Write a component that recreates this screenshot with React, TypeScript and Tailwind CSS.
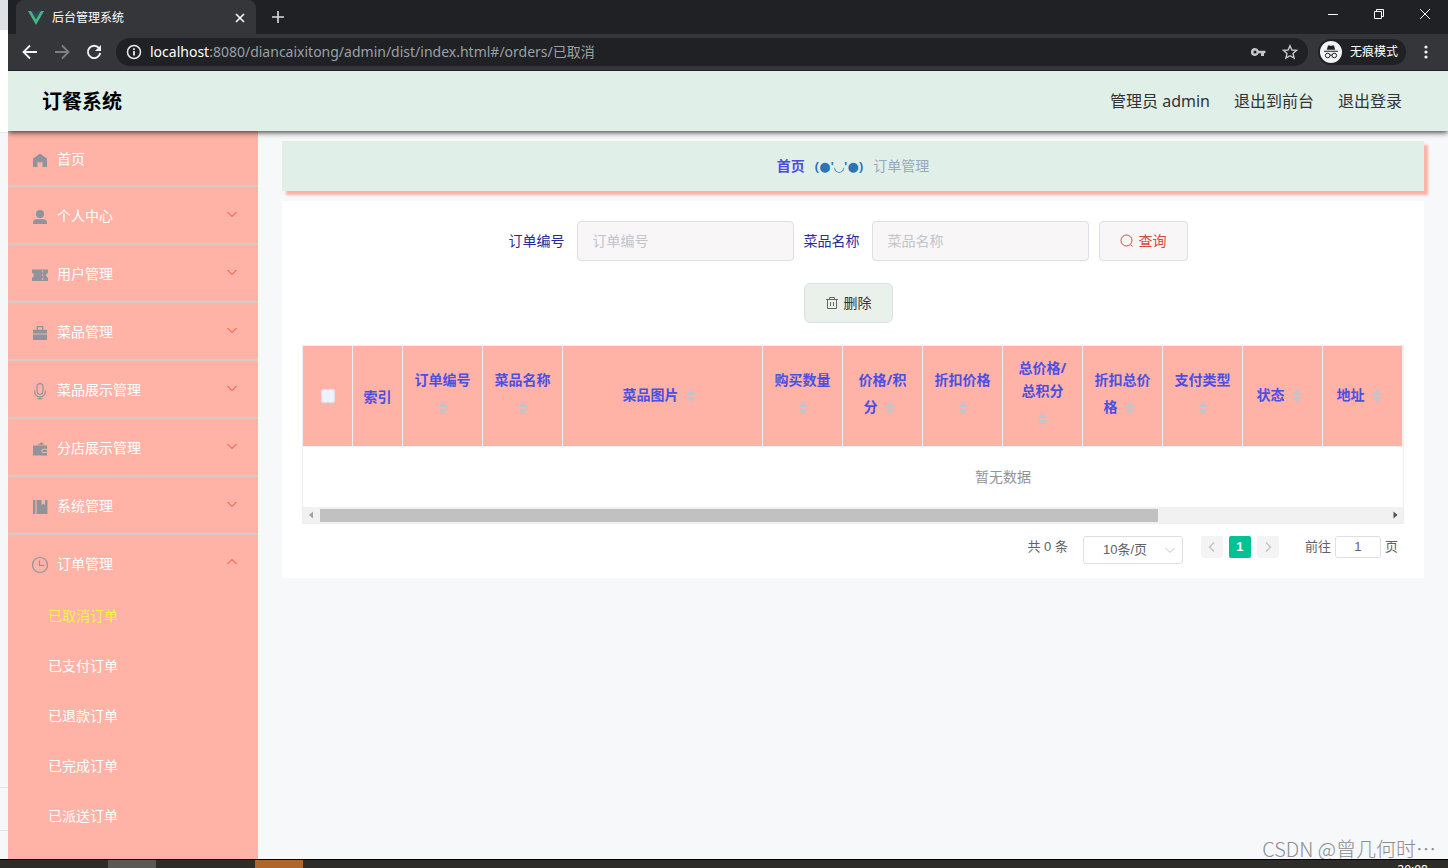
/**
 * @fileoverview Order management page of the canteen admin, shown in its browser window
 * @description Browser chrome, page header, side menu and the cancelled-orders table.
 *
 * @module App
 */

import type { ReactNode } from 'react';

interface MenuEntry {
  label: string;
  icon: ReactNode;
}

interface Column {
  label: string;
  /** Tailwind width class of the column */
  width: string;
  sortable?: boolean;
}

const MENU: MenuEntry[] = [
  {
    label: '个人中心',
    icon: (
      <>
        <circle cx="9" cy="6" r="4" />
        <path d="M2 16v-1.2A3.6 3.6 0 0 1 5.6 11.2h6.8A3.6 3.6 0 0 1 16 14.8V16z" />
      </>
    ),
  },
  {
    label: '用户管理',
    icon: (
      <path
        fillRule="evenodd"
        d="M1 3.5h16v3.2a2.6 2.6 0 0 0 0 5v3.3H1v-3.3a2.6 2.6 0 0 0 0-5zM11.2 4.5v2h1v-2zm0 3.8v2h1v-2zm0 3.8v2h1v-2z"
      />
    ),
  },
  {
    label: '菜品管理',
    icon: (
      <path
        fillRule="evenodd"
        d="M5.6 2h6.8v3.8H16v3.6H2V5.8h3.6zM7 3.3v2.5h4V3.3zM2 10.4h14V16H2z"
      />
    ),
  },
  {
    label: '菜品展示管理',
    icon: (
      <g fill="none" stroke="currentColor" strokeWidth="1.1">
        <rect x="6" y="1.6" width="6" height="10.6" rx="3" />
        <path d="M3.6 8.5v1a5.4 5.4 0 0 0 10.8 0v-1M9 14.8v2M6.5 16.8h5" />
      </g>
    ),
  },
  {
    label: '分店展示管理',
    icon: (
      <path
        fillRule="evenodd"
        d="M6.5 4.8 11 2l2 2.8zM2 5.6h14v3.2h-3.6a2.1 2.1 0 0 0 0 4.2H16v2.6H2zM12.4 9.8H16V12h-3.6a1.1 1.1 0 0 1 0-2.2z"
      />
    ),
  },
  {
    label: '系统管理',
    icon: <path d="M2 2h2.4v14H2zM5.6 2h5v5l1.7-1.2L14 7V2h2.4v14H5.6z" />,
  },
];

const ORDER_LINKS = ['已取消订单', '已支付订单', '已退款订单', '已完成订单', '已派送订单'];

const COLUMNS: Column[] = [
  { label: '索引', width: 'w-[50px]' },
  { label: '订单编号', width: 'w-[80px]', sortable: true },
  { label: '菜品名称', width: 'w-[80px]', sortable: true },
  { label: '菜品图片', width: 'w-[200px]', sortable: true },
  { label: '购买数量', width: 'w-[80px]', sortable: true },
  { label: '价格/积分', width: 'w-[80px]', sortable: true },
  { label: '折扣价格', width: 'w-[80px]', sortable: true },
  { label: '总价格/总积分', width: 'w-[80px]', sortable: true },
  { label: '折扣总价格', width: 'w-[80px]', sortable: true },
  { label: '支付类型', width: 'w-[80px]', sortable: true },
  { label: '状态', width: 'w-[80px]', sortable: true },
  { label: '地址', width: 'w-[80px]', sortable: true },
];

function Chevron({ className, up = false }: { className: string; up?: boolean }) {
  return (
    <svg viewBox="0 0 12 12" className={className} fill="none" stroke="currentColor">
      <path d={up ? 'M1.5 8 6 3.5 10.5 8' : 'M1.5 4 6 8.5 10.5 4'} />
    </svg>
  );
}

function SortCaret() {
  return (
    <span className="inline-flex h-[34px] w-6 items-center justify-center align-middle">
      <svg viewBox="0 0 10 12" className="h-3 w-2.5" fill="#c0c4cc">
        <path d="M0 5 5 0l5 5zM0 7h10l-5 5z" />
      </svg>
    </span>
  );
}

function TabStrip() {
  return (
    <div className="flex h-[34px] bg-[#202124] text-white">
      <div className="ml-2 flex w-60 items-center rounded-t-lg bg-[#35363a] pl-3 pr-[11px] pt-0.5">
        <svg viewBox="0 0 16 14" className="h-[14px] w-4">
          <path d="M0 0h3.2L8 8.3 12.8 0H16L8 13.9z" fill="#41b883" />
          <path d="M3.2 0H6.1L8 3.3 9.9 0h2.9L8 8.3z" fill="#35495e" />
        </svg>
        <span className="ml-2 flex-1 text-xs">后台管理系统</span>
        <button aria-label="关闭标签页">
          <svg viewBox="0 0 10 10" className="h-2.5 w-2.5" stroke="#fff" strokeWidth="1.6">
            <path d="M1 1l8 8M9 1 1 9" />
          </svg>
        </button>
      </div>
      <button aria-label="新标签页" className="ml-4">
        <svg viewBox="0 0 12 12" className="h-3 w-3" stroke="#dadce0" strokeWidth="1.6">
          <path d="M6 0v12M0 6h12" />
        </svg>
      </button>
      <div className="mb-1.5 ml-auto flex items-center gap-9 pr-[18px]">
        <button aria-label="最小化">
          <svg viewBox="0 0 10 10" className="h-2.5 w-2.5" stroke="#fff">
            <path d="M0 5.5h10" />
          </svg>
        </button>
        <button aria-label="还原">
          <svg viewBox="0 0 10 10" className="h-2.5 w-2.5" stroke="#fff" fill="none">
            <path d="M.5 2.5h7v7h-7zM2.5 2.5v-2h7v7h-2" />
          </svg>
        </button>
        <button aria-label="关闭">
          <svg viewBox="0 0 10 10" className="h-2.5 w-2.5" stroke="#fff">
            <path d="M0 0l10 10M10 0 0 10" />
          </svg>
        </button>
      </div>
    </div>
  );
}

function AddressBar() {
  return (
    <div className="relative z-20 flex h-[37px] items-center border-b border-[#202124] bg-[#35363a] pl-3.5 pr-3.5 text-white">
      <div className="flex items-center gap-4">
        <button aria-label="后退">
          <svg viewBox="0 0 16 16" className="h-4 w-4" fill="none" stroke="#f1f3f4" strokeWidth="1.8">
            <path d="M15 8H2M8 1.5 1.5 8 8 14.5" />
          </svg>
        </button>
        <button aria-label="前进">
          <svg viewBox="0 0 16 16" className="h-4 w-4" fill="none" stroke="#7d7f83" strokeWidth="1.8">
            <path d="M1 8h13M8 1.5 14.5 8 8 14.5" />
          </svg>
        </button>
        <button aria-label="刷新">
          <svg viewBox="0 0 16 16" className="h-4 w-4" fill="none" stroke="#f1f3f4" strokeWidth="1.9">
            <path d="M13 4.1A6.2 6.2 0 1 0 14.2 9" />
            <path d="M15 1v6H9z" fill="#f1f3f4" stroke="none" />
          </svg>
        </button>
      </div>
      <div className="ml-3.5 flex h-7 flex-1 items-center rounded-full bg-[#202124] px-2.5">
        <svg viewBox="0 0 16 16" className="h-4 w-4" fill="none" stroke="#e8eaed" strokeWidth="1.5">
          <circle cx="8" cy="8" r="6.5" />
          <path d="M8 7v4.5M8 4.3v1.6" strokeWidth="1.8" />
        </svg>
        <span className="ml-2 flex-1 text-sm text-[#9aa0a6]">
          <span className="text-white">localhost</span>
          :8080/diancaixitong/admin/dist/index.html#/orders/已取消
        </span>
        <button aria-label="密码" className="mr-4">
          <svg viewBox="0 0 16 16" className="h-4 w-4" fill="#c4c7ca">
            <path
              fillRule="evenodd"
              d="M5 4a4 4 0 1 0 3.7 5.3H11V12h3V9.3h1.4V6.7H8.7A4 4 0 0 0 5 4zm0 2.5a1.5 1.5 0 1 1 0 3 1.5 1.5 0 0 1 0-3z"
            />
          </svg>
        </button>
        <button aria-label="收藏">
          <svg viewBox="0 0 16 16" className="h-4 w-4" fill="none" stroke="#c4c7ca" strokeWidth="1.4">
            <path d="M8 1.7l1.9 4.3 4.7.4-3.6 3.1 1.1 4.6L8 11.7l-4.1 2.4L5 9.5 1.4 6.4l4.7-.4z" />
          </svg>
        </button>
      </div>
      <div className="ml-2.5 flex h-[26px] items-center gap-2 rounded-full bg-[#202124] pl-0.5 pr-2">
        <svg viewBox="0 0 22 22" className="h-[22px] w-[22px]" fill="#202124">
          <circle cx="11" cy="11" r="11" fill="#f1f3f4" />
          <path d="M8 4.6h1.8l1.2.5 1.2-.5H14l1.2 4.2H6.8zM4 9.8h14v1H4z" />
          <g fill="none" stroke="#202124">
            <circle cx="7.7" cy="14.5" r="2.3" />
            <circle cx="14.3" cy="14.5" r="2.3" />
            <path d="M10 14.3q1-.7 2 0" />
          </g>
        </svg>
        <span className="text-xs">无痕模式</span>
      </div>
      <button aria-label="菜单" className="ml-3">
        <svg viewBox="0 0 16 16" className="h-4 w-4" fill="#f1f3f4">
          <circle cx="8" cy="3" r="1.6" />
          <circle cx="8" cy="8" r="1.6" />
          <circle cx="8" cy="13" r="1.6" />
        </svg>
      </button>
    </div>
  );
}

function MenuIcon({ children }: { children: ReactNode }) {
  return (
    <span className="mr-[5px] mt-0.5 flex w-6 justify-center text-[#909399]">
      <svg viewBox="0 0 18 18" className="h-[18px] w-[18px]" fill="currentColor">
        {children}
      </svg>
    </span>
  );
}

function Sidebar() {
  return (
    <nav className="w-[250px] shrink-0 bg-[#ffb2a6] text-sm text-white">
      <a href="#/" className="flex h-14 items-center border-b-2 border-[#d3cccc] pl-5 pt-0.5">
        <MenuIcon>
          <path d="M9 2.5 16 7.5V16h-4.5v-4.7h-5V16H2V7.5z" />
        </MenuIcon>
        首页
      </a>
      {MENU.map((entry) => (
        <button
          key={entry.label}
          className="flex h-[58px] w-full items-center border-b-2 border-[#d3cccc] px-5 pt-0.5 text-left"
        >
          <MenuIcon>{entry.icon}</MenuIcon>
          <span className="flex-1">{entry.label}</span>
          <Chevron className="mb-1 h-3 w-3 text-[#f9402f]" />
        </button>
      ))}
      <button className="flex h-14 w-full items-center px-5 pt-0.5 text-left">
        <MenuIcon>
          <g fill="none" stroke="currentColor" strokeWidth="1.2">
            <circle cx="9" cy="9" r="7.5" />
            <path d="M8.5 4.5v5h5" />
          </g>
        </MenuIcon>
        <span className="flex-1">订单管理</span>
        <Chevron up className="mb-1 h-3 w-3 text-[#f9402f]" />
      </button>
      {ORDER_LINKS.map((label, i) => (
        <a
          key={label}
          href="#/orders"
          className={`flex h-[50px] items-center pl-10 ${i === 0 ? 'text-[#f4f442]' : ''}`}
        >
          {label}
        </a>
      ))}
    </nav>
  );
}

function SearchForm() {
  const inputClass =
    'ml-3 mr-2.5 h-10 w-[217px] rounded border border-[#dcdfe6] bg-[#f8f6f7] px-[15px] pb-0.5 placeholder:text-[#c0c4cc]';

  return (
    <form className="flex items-center justify-center pr-2.5 text-sm text-[#28289c]">
      <label htmlFor="order-no">订单编号</label>
      <input id="order-no" placeholder="订单编号" className={inputClass} />
      <label htmlFor="dish-name">菜品名称</label>
      <input id="dish-name" placeholder="菜品名称" className={inputClass} />
      <button
        type="button"
        className="flex h-10 items-center gap-[5px] rounded border border-[#dcdfe6] bg-[#f8f6f7] px-5 text-[#d9463e]"
      >
        <svg viewBox="0 0 14 14" className="h-3.5 w-3.5" fill="none" stroke="currentColor">
          <circle cx="6.5" cy="6.5" r="5.5" />
          <path d="M10.5 10.5 12.5 12.5" />
        </svg>
        查询
      </button>
    </form>
  );
}

function OrderTable() {
  const thClass = 'h-[101px] border-b border-r border-[#ebeef5] bg-[#ffb2a6]';

  return (
    <div className="mt-[22px] border border-[#ebeef5] text-sm">
      <div className="overflow-hidden">
        <table className="w-[1400px] table-fixed border-separate border-spacing-0">
          <thead>
            <tr className="leading-[23px] text-[#4b4fe2]">
              <th className={`${thClass} w-[50px]`}>
                <input
                  type="checkbox"
                  aria-label="全选"
                  className="mx-auto block h-3.5 w-3.5 appearance-none rounded-xs border border-[#dcdfe6] bg-[#edf2fc]"
                />
              </th>
              {COLUMNS.map((column) => (
                <th key={column.label} className={`${thClass} ${column.width} px-[9px] font-bold`}>
                  {column.label}
                  {column.sortable && <SortCaret />}
                </th>
              ))}
              <th className={thClass} />
            </tr>
          </thead>
          <tbody>
            <tr>
              <td colSpan={14} className="h-[60px] text-center text-[#909399]">
                暂无数据
              </td>
            </tr>
          </tbody>
        </table>
      </div>
      <div className="flex h-4 items-center bg-[#f1f1f1]">
        <svg viewBox="0 0 17 16" className="h-4 w-[17px] shrink-0" fill="#a3a3a3">
          <path d="M10 4.5v7L6 8z" />
        </svg>
        <div className="h-[13px] flex-1">
          <div className="h-full w-11/14 bg-[#c1c1c1]" />
        </div>
        <svg viewBox="0 0 17 16" className="h-4 w-[17px] shrink-0" fill="#505050">
          <path d="M7.5 4.5v7L11.5 8z" />
        </svg>
      </div>
    </div>
  );
}

function Pagination() {
  return (
    <div className="mt-3 flex items-start justify-end pr-1.5 text-[13px] leading-[22px] text-[#606266] [font-family:'Liberation_Sans','Noto_Sans_CJK_SC',sans-serif]">
      <span className="mr-[15px]">共 0 条</span>
      <div className="relative mr-[18px]">
        <select
          aria-label="每页条数"
          className="h-7 w-[100px] appearance-none rounded-[3px] border border-[#dcdfe6] bg-white pl-[19px]"
        >
          <option>10条/页</option>
        </select>
        <Chevron className="pointer-events-none absolute right-[7px] top-2 h-3 w-3 text-[#c0c4cc]" />
      </div>
      <div className="flex gap-1.5">
        <button aria-label="上一页" className="flex h-[22px] w-[22px] items-center justify-center rounded-xs bg-[#f4f4f5]">
          <svg viewBox="0 0 12 12" className="h-3 w-3" fill="none" stroke="#c0c4cc" strokeWidth="1.5">
            <path d="M8 1.5 3.5 6 8 10.5" />
          </svg>
        </button>
        <button className="h-[22px] w-[22px] rounded-xs bg-[#00c292] font-bold text-white">1</button>
        <button aria-label="下一页" className="flex h-[22px] w-[22px] items-center justify-center rounded-xs bg-[#f4f4f5]">
          <svg viewBox="0 0 12 12" className="h-3 w-3" fill="none" stroke="#c0c4cc" strokeWidth="1.5">
            <path d="M4 1.5 8.5 6 4 10.5" />
          </svg>
        </button>
      </div>
      <label className="ml-[26px] flex gap-1">
        前往
        <input
          defaultValue="1"
          className="h-[22px] w-[46px] rounded-[3px] border border-[#dcdfe6] text-center"
        />
        页
      </label>
    </div>
  );
}

/** Edge of the window that lies behind the browser */
function BackgroundWindow() {
  return (
    <div className="relative z-20 flex w-2 shrink-0 flex-col bg-[#f6f7f9]">
      <div className="h-[30px] bg-[#dee1e6]" />
      <div className="h-[103px] border-b border-[#e3e5e8] bg-white" />
      <div className="mb-7 mt-auto h-11 border-y border-[#e3e5e8]" />
    </div>
  );
}

export default function App() {
  return (
    <div className="flex min-h-screen flex-col bg-[#f7f8fa] [font-family:'Noto_Sans','Noto_Sans_CJK_SC',sans-serif]">
      <div className="flex flex-1">
        <BackgroundWindow />
        <div className="flex min-w-0 flex-1 flex-col">
          <TabStrip />
          <AddressBar />
          <header className="relative z-10 flex h-[60px] items-center bg-[#e0efe7] pl-[34px] pr-[46px] shadow-[0_1px_6px_#222]">
            <h1 className="pt-0.5 text-xl font-bold text-black">订餐系统</h1>
            <div className="ml-auto flex gap-6 text-base text-[#333]">
              <span>管理员 admin</span>
              <a href="#/front">退出到前台</a>
              <a href="#/login">退出登录</a>
            </div>
          </header>
          <div className="flex flex-1">
            <Sidebar />
            <main className="relative min-w-0 flex-1 overflow-hidden px-6 py-2.5">
              <div className="flex h-[50px] items-center justify-center bg-[#e0efe7] text-sm shadow-[4px_4px_2px_#ffb2a6]">
                <a href="#/" className="font-bold text-[#4b4be0]">
                  首页
                </a>
                <span className="mx-2.5 text-[13px] font-bold text-[#2c74b5] [font-family:'Open_Sans','DejaVu_Sans',sans-serif]">
                  (●'◡'●)
                </span>
                <span className="text-[#97a8be]">订单管理</span>
              </div>
              <section className="mt-2.5 bg-white px-5 pb-3.5 pt-5">
                <SearchForm />
                <div className="mt-[22px] flex justify-center pr-2.5">
                  <button className="flex h-10 items-center gap-[5px] rounded-md border border-[#dcdfe6] bg-[#eaf1ea] px-5 text-sm text-[#333]">
                    <svg viewBox="0 0 14 14" className="h-3.5 w-3.5" fill="none" stroke="#666">
                      <path d="M1 3.5h12M4.5 3V1.5h5V3M2.5 3.5v9h9v-9M5.5 6v4M8.5 6v4" />
                    </svg>
                    删除
                  </button>
                </div>
                <OrderTable />
                <Pagination />
              </section>
              <p className="absolute -bottom-1 right-3 text-xl font-light leading-7 text-[#8b8d90] [font-family:'Noto_Sans_CJK_SC',sans-serif]">
                CSDN @曾几何时…
              </p>
            </main>
          </div>
        </div>
      </div>
      <footer className="flex h-[9px] overflow-hidden border-t border-black bg-[#2e2c28]">
        <div className="ml-[108px] w-12 bg-[#5b5955]" />
        <div className="ml-[99px] w-12 bg-[#b0662a]" />
        <span className="ml-auto mr-5 mt-1 text-xs leading-3 text-white">20:08</span>
      </footer>
    </div>
  );
}
